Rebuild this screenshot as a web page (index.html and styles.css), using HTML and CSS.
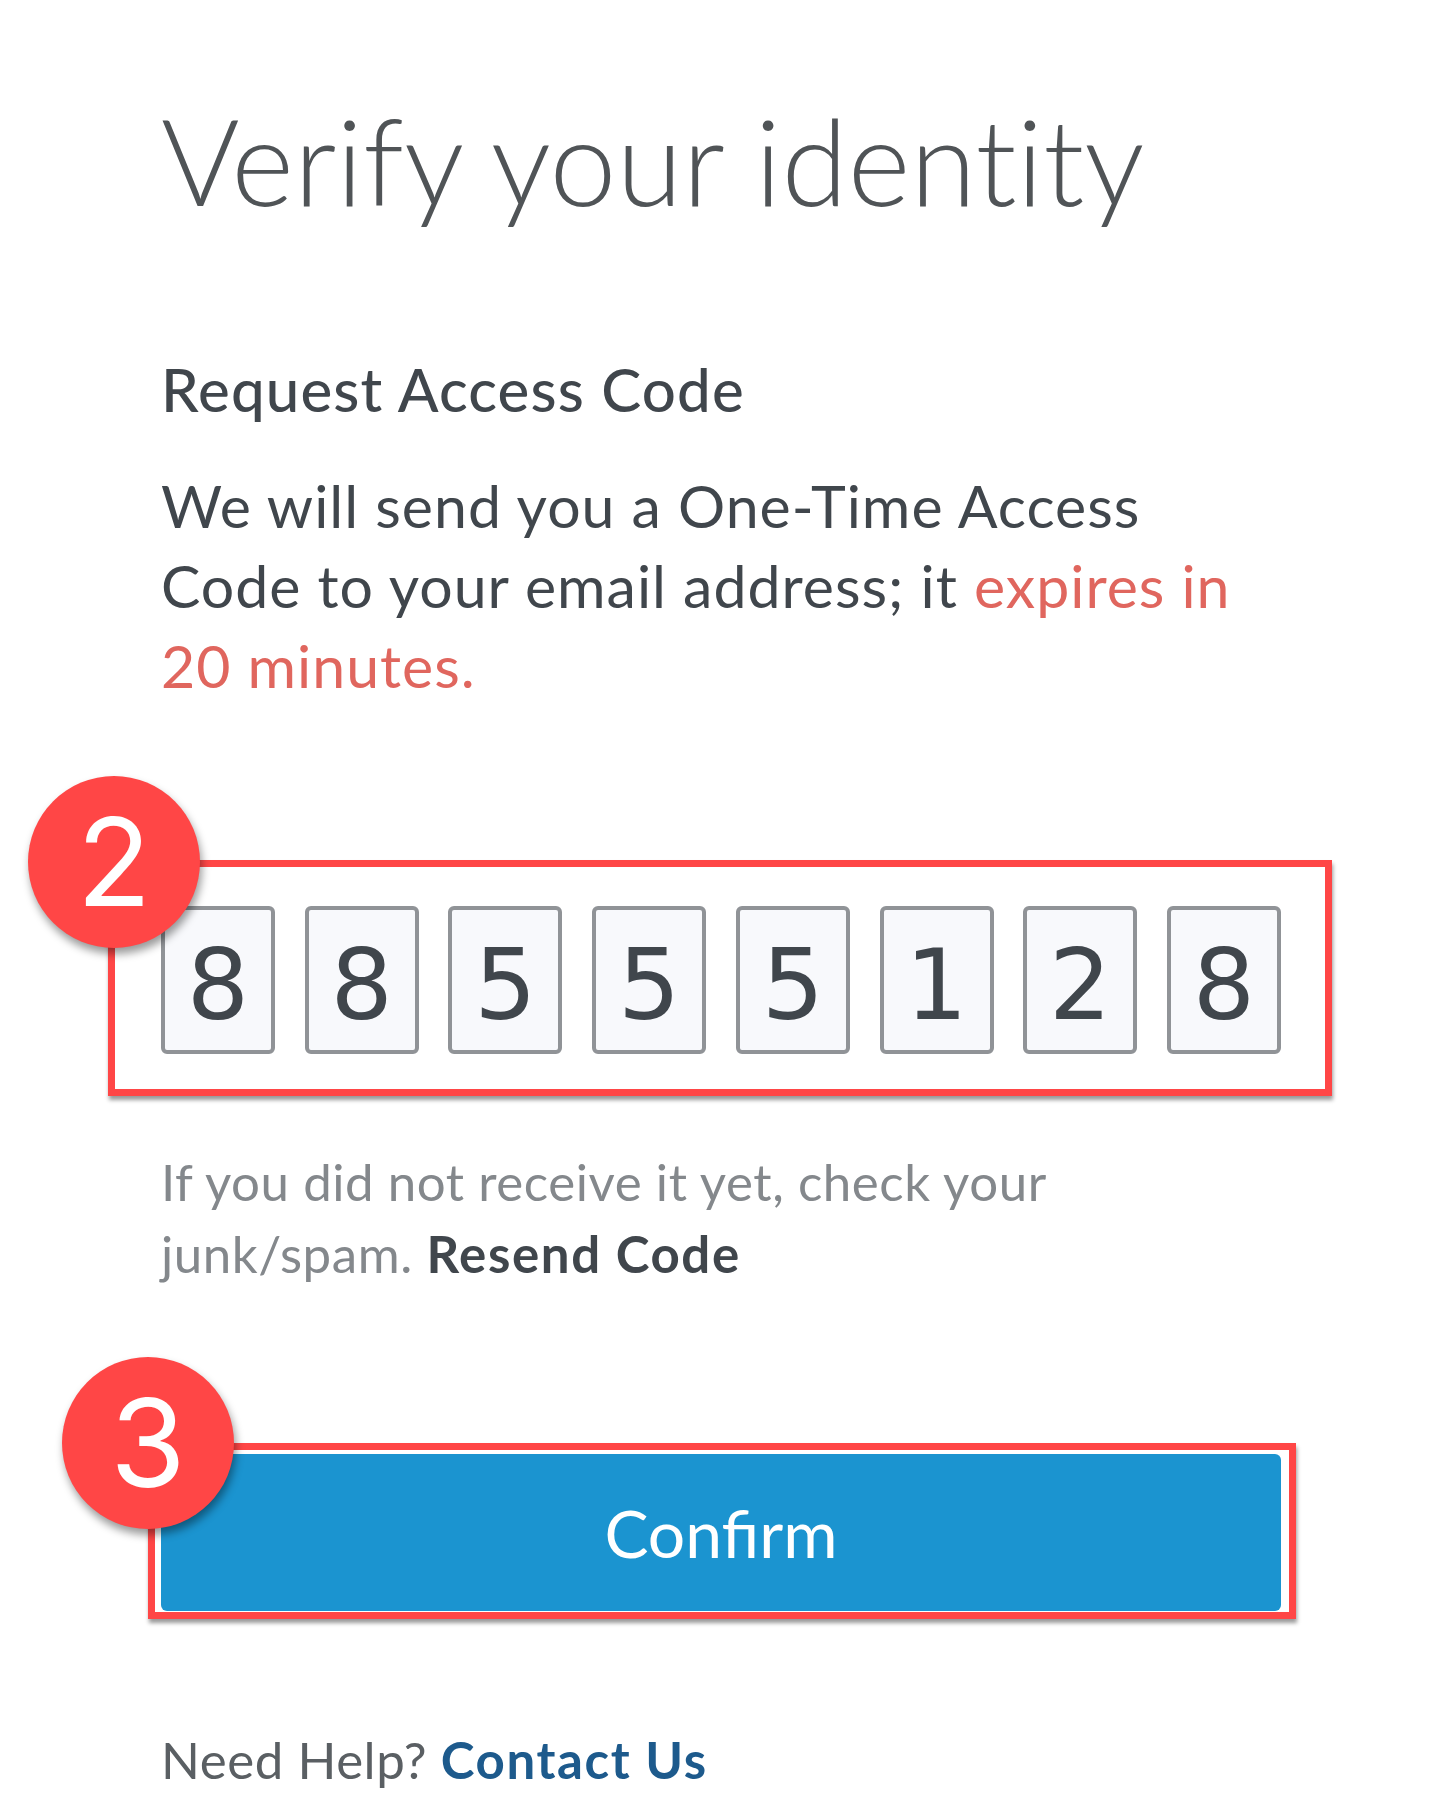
FILE: index.html
```html
<!DOCTYPE html>
<html lang="en">
<head>
    <meta charset="UTF-8">
    <meta name="viewport" content="width=device-width, initial-scale=1.0">
    <title>Verify your identity</title>
    <link rel="stylesheet" href="styles.css">
</head>
<body>
    <div class="container">
        <h1 class="title">Verify your identity</h1>

        <h2 class="subtitle">Request Access Code</h2>
        <p class="intro">We will send you a One-Time Access<br>Code to your email address; it <span class="expires">expires in<br>20 minutes.</span></p>

        <div class="code-row">
            <div class="callout callout-code"></div>
            <div class="step step-two">2</div>
            <div class="code-box">8</div>
            <div class="code-box">8</div>
            <div class="code-box">5</div>
            <div class="code-box">5</div>
            <div class="code-box">5</div>
            <div class="code-box">1</div>
            <div class="code-box">2</div>
            <div class="code-box">8</div>
        </div>

        <p class="resend">If you did not receive it yet, check your<br>junk/spam. <a href="#" class="resend-link">Resend Code</a></p>

        <div class="confirm-row">
            <div class="callout callout-confirm"></div>
            <div class="step step-three">3</div>
            <a href="#" class="confirm-button">Confirm</a>
        </div>

        <p class="help">Need Help? <a href="#" class="help-link">Contact Us</a></p>
    </div>
</body>
</html>
```

FILE: styles.css
```css
* {
    margin: 0;
    padding: 0;
    box-sizing: border-box;
}

html, body {
    height: 1808px;
    overflow: hidden;
}

body {
    font-family: 'Lato', 'Noto Sans', sans-serif;
    background: #fff;
    color: #40464c;
}

a {
    text-decoration: none;
}

.container {
    width: 1120px;
    margin-left: 161px;
    padding-top: 95px;
}

.title {
    font-size: 120px;
    line-height: 130px;
    font-weight: 300;
    font-variant-ligatures: none;
    color: #505457;
}

.subtitle {
    margin-top: 129px;
    font-size: 60px;
    line-height: 70px;
    font-weight: 500;
    letter-spacing: 1.15px;
}

.intro {
    margin-top: 42px;
    font-size: 59px;
    line-height: 80px;
    font-weight: 400;
    letter-spacing: 1px;
}

.expires {
    color: #e0665e;
}

.code-row {
    position: relative;
    display: flex;
    justify-content: space-between;
    margin-top: 200px;
    height: 148px;
}

.code-box {
    width: 114px;
    height: 148px;
    background: #f8f9fc;
    border: 4px solid #909397;
    border-radius: 6px;
    font-family: 'DejaVu Sans', sans-serif;
    font-size: 98px;
    line-height: 151px;
    text-align: center;
    color: #40464c;
}

.callout {
    position: absolute;
    border: 7px solid #ff4646;
    box-shadow: 1px 4px 4px rgba(0, 0, 0, 0.4);
}

.callout-code {
    left: -53px;
    top: -46px;
    width: 1224px;
    height: 236px;
}

.callout-confirm {
    left: -13px;
    top: -11px;
    width: 1148px;
    height: 176px;
}

.step {
    position: absolute;
    z-index: 1;
    width: 172px;
    height: 172px;
    border-radius: 50%;
    background: #ff4646;
    box-shadow: 2px 6px 8px rgba(0, 0, 0, 0.4);
    color: #fff;
    font-family: 'Inter', sans-serif;
    font-weight: 400;
    font-size: 122px;
    line-height: 172px;
    text-align: center;
}

.step-two {
    left: -133px;
    top: -130px;
}

.step-three {
    left: -99px;
    top: -97px;
}

.resend {
    margin-top: 92px;
    font-size: 51px;
    line-height: 72px;
    letter-spacing: 0.56px;
    color: #84888c;
}

.resend-link {
    font-weight: 700;
    letter-spacing: 1.6px;
    color: #40464c;
}

.confirm-row {
    position: relative;
    margin-top: 164px;
    height: 157px;
}

.confirm-button {
    display: block;
    height: 157px;
    background: #1b94d0;
    border-radius: 6px;
    color: #fff;
    font-size: 66px;
    line-height: 157px;
    text-align: center;
}

.help {
    margin-top: 113px;
    font-size: 51px;
    line-height: 72px;
    letter-spacing: 0.56px;
    color: #5a5f63;
}

.help-link {
    font-weight: 700;
    letter-spacing: 1.6px;
    color: #1d5a8c;
}
```
